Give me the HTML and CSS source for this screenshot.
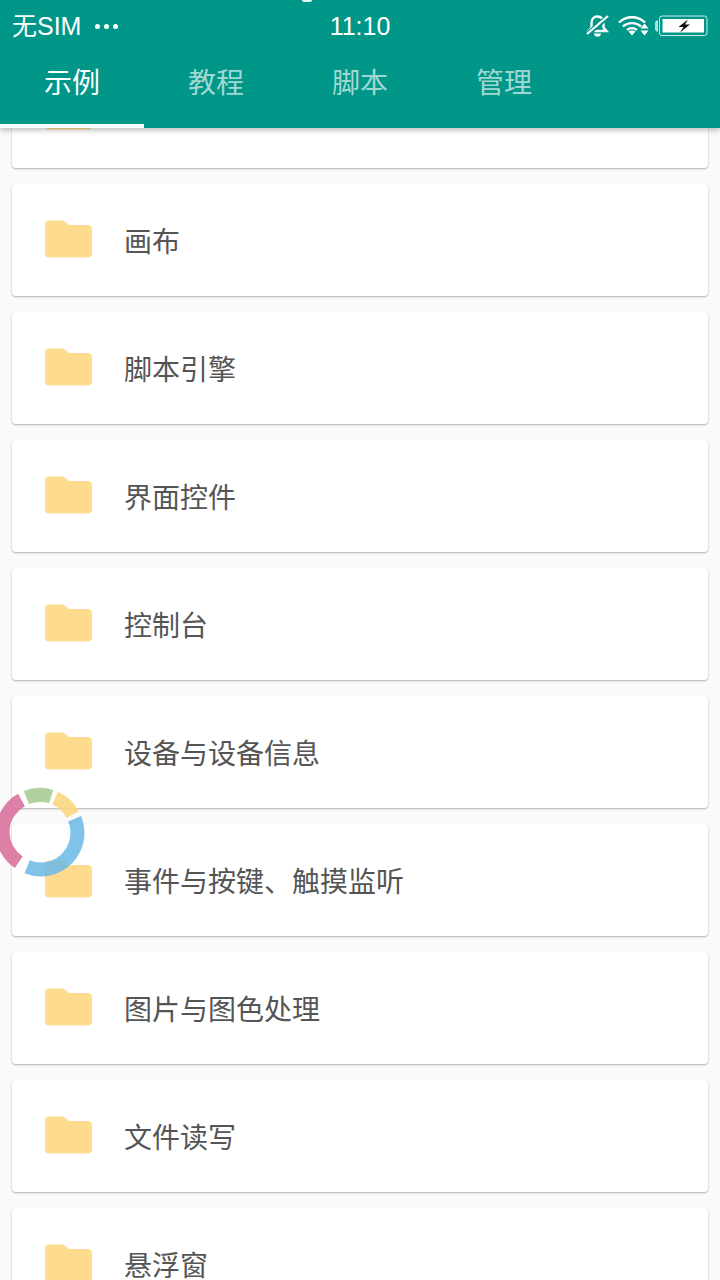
FILE: index.html
```html
<!DOCTYPE html>
<html lang="zh-CN">
<head>
  <meta charset="UTF-8" />
  <meta name="viewport" content="width=device-width, initial-scale=1.0" />
  <title>示例</title>
  <link rel="stylesheet" href="styles.css">
</head>
<body>

<svg width="0" height="0" class="defs">
  <symbol id="folder" viewBox="0 0 48 38">
    <path d="M4 0h13c2 0 3 .6 4.200 1.800L24 4.600h20c2.200 0 4 1.800 4 4V34c0 2.200-1.800 4-4 4H4c-2.200 0-4-1.800-4-4V4c0-2.200 1.800-4 4-4z"/>
  </symbol>
</svg>

<div class="app">
  <header class="appbar">
    <span class="notch"></span>
    <div class="status">
      <div class="status-left">
        <span class="carrier">无SIM</span>
        <span class="dots"><i></i><i></i><i></i></span>
      </div>
      <div class="clock">11:10</div>
      <div class="status-right">
        <svg class="ic-bell" width="24" height="24" viewBox="0 0 24 24">
          <path d="M11.500 2.500c-4 0-6 3-6 6.500v4.500l-3 3.500h18l-3-3.500V9c0-3.500-2-6.500-6-6.500z" fill="none" stroke="#fff" stroke-width="2.400"/>
          <path d="M8 19.500h7c0 2-1.500 3.300-3.500 3.300S8 21.500 8 19.500z" fill="#fff"/>
          <path d="M1 20.500L22 2.500" stroke="#009688" stroke-width="5"/>
          <path d="M1 20L22 2" stroke="#fff" stroke-width="2.200"/>
        </svg>
        <svg class="ic-wifi" width="32" height="22" viewBox="0 0 32 22">
          <g fill="none" stroke="#fff" stroke-width="2.400">
            <path d="M1 7.500c7-7 19-7 26 0"/>
            <path d="M5 11.500c5-4.500 13-4.500 18 0"/>
            <path d="M9 15c3-2.500 7-2.500 10 0"/>
          </g>
          <path d="M10.500 16.500c2-1.300 5-1.300 7 0L14 20.500z" fill="#fff"/>
          <path d="M26.500 8.500l4 5h-8zM26.500 20.500l4-5h-8z" fill="#fff"/>
        </svg>
        <svg class="ic-batt" width="53" height="22" viewBox="0 0 53 22">
          <path d="M0 8c0-1.500 1-2.500 3-3v12c-2-.5-3-1.500-3-3z" fill="#fff" opacity=".7"/>
          <rect x="4.500" y="1" width="47.500" height="19.500" rx="2.500" fill="none" stroke="#fff" opacity=".8"/>
          <rect x="7.500" y="4" width="41.500" height="13.500" fill="#fff"/>
          <path d="M33 4.500l-9.500 7.500h5l-3.500 5.500 10-8h-5z" fill="#111"/>
        </svg>
      </div>
    </div>
    <nav class="tabs">
      <div class="tab active">示例</div>
      <div class="tab">教程</div>
      <div class="tab">脚本</div>
      <div class="tab">管理</div>
    </nav>
  </header>

  <main class="scroller">
    <div class="list">
      <div class="card"><svg class="folder"><use href="#folder"/></svg></div>
      <div class="card"><svg class="folder"><use href="#folder"/></svg><span>画布</span></div>
      <div class="card"><svg class="folder"><use href="#folder"/></svg><span>脚本引擎</span></div>
      <div class="card"><svg class="folder"><use href="#folder"/></svg><span>界面控件</span></div>
      <div class="card"><svg class="folder"><use href="#folder"/></svg><span>控制台</span></div>
      <div class="card"><svg class="folder"><use href="#folder"/></svg><span>设备与设备信息</span></div>
      <div class="card"><svg class="folder"><use href="#folder"/></svg><span>事件与按键、触摸监听</span></div>
      <div class="card"><svg class="folder"><use href="#folder"/></svg><span>图片与图色处理</span></div>
      <div class="card"><svg class="folder"><use href="#folder"/></svg><span>文件读写</span></div>
      <div class="card"><svg class="folder"><use href="#folder"/></svg><span>悬浮窗</span></div>
    </div>
  </main>

  <!-- floating loader, sits over the list -->
  <svg class="ring" width="100" height="100" viewBox="0 0 100 100">
    <g fill="none" stroke-width="14">
      <path d="M31.500 18A36.500 36.500 0 0 0 28.800 80.300" stroke="#d9709c"/>
      <path d="M36.400 15.600A36.500 36.500 0 0 1 61.200 14.700" stroke="#a8cb92"/>
      <path d="M65 16.100A36.500 36.500 0 0 1 82.600 32.500" stroke="#fad67f"/>
      <path d="M84.600 36.800A36.500 36.500 0 0 1 37.200 84.700" stroke="#6fbbe6"/>
    </g>
  </svg>
</div>

</body>
</html>
```

FILE: styles.css
```css
html, body {
  margin: 0;
  padding: 0;
}
body {
  font-family: "Noto Sans CJK SC", "Noto Sans", sans-serif;
  background: #fafafa;
}
.defs {
  display: block;
  height: 0;
}
.app {
  position: relative;
  width: 720px;
  height: 1280px;
  overflow: hidden;
}
.appbar {
  position: relative;
  z-index: 2;
  height: 128px;
  background: #009688;
  color: #fff;
  box-shadow: 0 2px 6px rgba(0,0,0,0.28);
}
.notch {
  position: absolute;
  left: 302px;
  top: 0;
  width: 10px;
  height: 2px;
  border-radius: 0 0 5px 5px;
  background: #e8f4f2;
}
.status {
  height: 52px;
  display: grid;
  grid-template-columns: 1fr auto 1fr;
  align-items: center;
  padding: 0 12px;
  box-sizing: border-box;
}
.status-left {
  display: flex;
  align-items: center;
  font-size: 25px;
  line-height: 52px;
}
.carrier {
  font-family: "Liberation Sans", "Noto Sans CJK SC", sans-serif;
}
.dots {
  display: flex;
  gap: 4px;
  margin-left: 14px;
}
.dots i {
  width: 5px;
  height: 5px;
  border-radius: 50%;
  background: #fff;
}
.clock {
  font-family: "Liberation Sans", sans-serif;
  font-size: 25px;
  padding-top: 1px;
}
.status-right {
  display: flex;
  justify-content: flex-end;
  align-items: center;
}
.ic-bell {
  margin-right: 8px;
}
.ic-wifi {
  margin-right: 5px;
}
.tabs {
  display: flex;
  height: 76px;
}
.tab {
  position: relative;
  width: 144px;
  height: 76px;
  line-height: 59px;
  text-align: center;
  font-size: 28px;
  color: rgba(255,255,255,0.65);
}
.tab.active {
  color: #fff;
}
.tab.active::after {
  content: "";
  position: absolute;
  left: 0;
  right: 0;
  bottom: 0;
  height: 4px;
  background: #fff;
}
.scroller {
  height: 1152px;
  overflow: hidden;
}
.list {
  display: flex;
  flex-direction: column;
  gap: 16px;
  margin-top: -72px;
  padding: 0 12px;
}
.card {
  flex: none;
  height: 112px;
  display: flex;
  align-items: center;
  padding-left: 33px;
  background: #fff;
  border-radius: 4px;
  box-shadow: 0 1px 2px rgba(0,0,0,0.3);
  font-size: 28px;
  color: #555;
}
.folder {
  width: 47px;
  height: 38px;
  margin: -2px 32px 0 0;
  fill: #ffdb8f;
}
.ring {
  position: absolute;
  left: -10px;
  top: 782px;
  z-index: 3;
  opacity: 0.88;
}
```
